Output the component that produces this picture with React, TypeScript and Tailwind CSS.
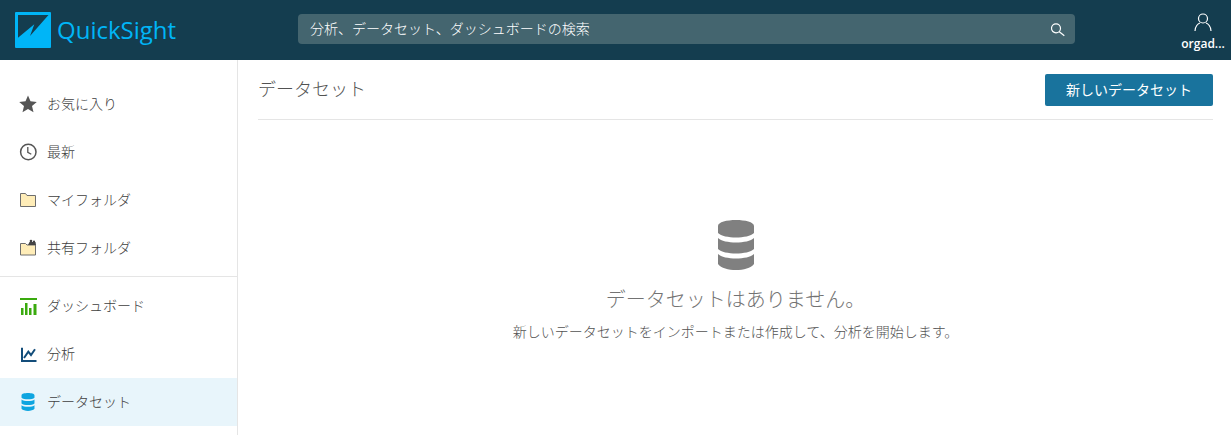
import React from "react";

const sans = "font-['Open_Sans','Noto_Sans_CJK_JP',sans-serif]";

const Logo = () => (
  <svg viewBox="0 0 36 36" className="h-9 w-9">
    <rect width="36" height="36" rx="1" fill="#00b5f7" />
    <path d="M3 3h30.500L15 24l4.300-11.700L3 25.700z" fill="#143d4f" />
  </svg>
);

const SearchIcon = () => (
  <svg viewBox="0 0 16 16" className="h-4 w-4" fill="none" stroke="#ffffff" strokeWidth="1.200">
    <circle cx="5" cy="7.300" r="4.500" />
    <path d="M8.300 10.700l5 4" />
  </svg>
);

const Star = () => (
  <svg viewBox="0 0 20 20" className="h-5 w-5" fill="#555555">
    <path d="M10 1.500l2.500 5.800 6.300.6-4.800 4.100 1.500 6.200L10 15l-5.500 3.200L6 12 1.200 7.900l6.300-.6z" />
  </svg>
);

const Clock = () => (
  <svg viewBox="0 0 20 20" className="h-5 w-5" fill="none" stroke="#555555">
    <circle cx="10.300" cy="10" r="7.700" strokeWidth="1.500" />
    <path d="M9.800 5v5.300l3.500 2" strokeWidth="1.300" />
  </svg>
);

const Folder = () => (
  <svg viewBox="0 0 20 20" className="h-5 w-5" fill="#ffedb8" stroke="#6e6e6e">
    <path d="M2.500 3.500h5l1.500 2h8.500v11h-15z" />
  </svg>
);

const SharedFolder = () => (
  <svg viewBox="0 0 20 20" className="h-5 w-5" stroke="#6e6e6e">
    <path d="M2.500 5.500h5l1.500 1.500h8.500v10h-15z" fill="#ffedb8" />
    <circle cx="13" cy="3" r="1.300" fill="#444444" stroke="none" />
    <circle cx="16" cy="3.500" r="1.100" fill="#444444" stroke="none" />
    <path d="M10 7l1.500-3h6L18 7z" fill="#444444" stroke="none" />
  </svg>
);

const Bars = () => (
  <svg viewBox="0 0 20 20" className="h-5 w-5" fill="#3aaa0e">
    <path d="M2 2h17v2H2zM3 12h2.500v7H3zM7 7h2.500v12H7zM11 12h2.500v7H11zM15.500 8h3v11h-3z" />
  </svg>
);

const Chart = () => (
  <svg viewBox="0 0 20 20" className="h-5 w-5" fill="none" stroke="#134d7a" strokeWidth="2">
    <path d="M4 3.700V17h14.500M6 14l4.300-6.300L13 11l4-5.700" />
  </svg>
);

const Database = ({ color, className }: { color: string; className: string }) => (
  <svg viewBox="0 0 36 50" className={className} fill={color}>
    <path d="M0 6C0-2 36-2 36 6v7c-6 6-30 6-36 0zM0 18c6 6 30 6 36 0v11c-6 6-30 6-36 0zM0 34c6 6 30 6 36 0v10c-6 8-30 8-36 0z" />
  </svg>
);

const User = () => (
  <svg viewBox="0 0 20 20" className="h-5 w-5" fill="none" stroke="#ffffff" strokeWidth="1.200">
    <circle cx="10" cy="6.500" r="4.500" />
    <path d="M2 19c0-4.500 3-7.500 5-8M18 19c0-4.500-3-7.500-5-8" />
  </svg>
);

function NavItem({ icon, label, active }: { icon: React.ReactNode; label: string; active?: boolean }) {
  return (
    <div className={`flex h-12 items-center gap-2.25 pl-4.5 text-sm font-light text-neutral-700 ${active ? "bg-[#e8f5fb]" : ""}`}>
      {icon}
      <span>{label}</span>
    </div>
  );
}

export default function App() {
  return (
    <div className={`flex h-screen flex-col overflow-hidden bg-white ${sans}`}>
      <header className="flex h-15 shrink-0 items-center bg-[#143d4f]">
        <div className="flex w-[298px] items-center gap-1.5 pl-[15px]">
          <Logo />
          <span className="text-2xl font-medium text-[#00b5f7]">QuickSight</span>
        </div>
        <div className="mb-0.5 flex h-7.5 w-[777px] items-center justify-between rounded-sm bg-[#44656f] pr-2 pl-3 text-sm font-light text-white">
          <span>分析、データセット、ダッシュボードの検索</span>
          <SearchIcon />
        </div>
        <div className="ml-auto flex w-14 flex-col items-center gap-1 pt-1 text-xs font-semibold text-white">
          <User />
          <span>orgad...</span>
        </div>
      </header>
      <div className="flex flex-1">
        <aside className="w-[238px] shrink-0 border-r border-neutral-200 pt-5">
          <NavItem icon={<Star />} label="お気に入り" />
          <NavItem icon={<Clock />} label="最新" />
          <NavItem icon={<Folder />} label="マイフォルダ" />
          <NavItem icon={<SharedFolder />} label="共有フォルダ" />
          <div className="h-2.5 pt-1">
            <div className="border-t border-neutral-200" />
          </div>
          <NavItem icon={<Bars />} label="ダッシュボード" />
          <NavItem icon={<Chart />} label="分析" />
          <NavItem icon={<Database color="#0ea5e0" className="h-4.5 w-5" />} label="データセット" active />
        </aside>
        <main className="flex-1 pr-4.5 pl-5">
          <div className="flex h-15 items-center justify-between border-b border-neutral-200">
            <h1 className="mb-0.5 text-lg font-light text-neutral-600">データセット</h1>
            <button className="h-8 w-42 rounded-xs bg-[#19739d] text-sm text-white">新しいデータセット</button>
          </div>
          <div className="flex flex-col items-center pt-25">
            <Database color="#808080" className="h-12.5 w-9" />
            <p className="mt-4 text-xl font-light text-neutral-500">データセットはありません。</p>
            <p className="mt-2 text-sm font-light text-neutral-600">新しいデータセットをインポートまたは作成して、分析を開始します。</p>
          </div>
        </main>
      </div>
    </div>
  );
}
